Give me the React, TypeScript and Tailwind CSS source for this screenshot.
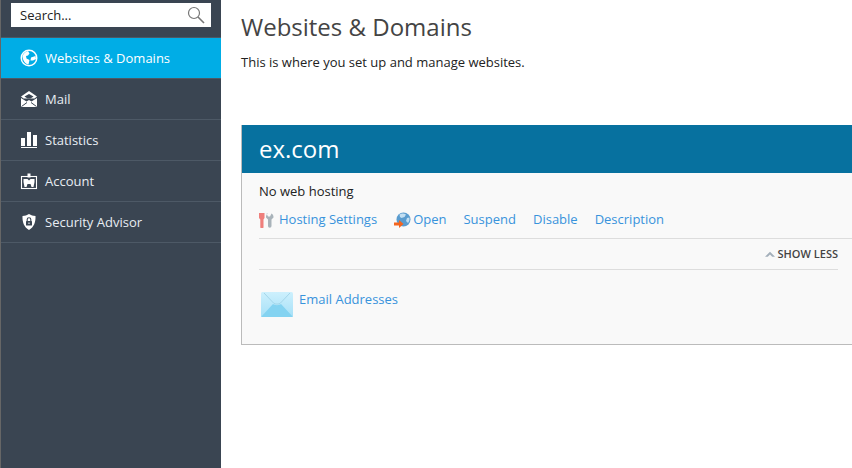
const font = "[font-family:'Open_Sans',sans-serif]";

function SearchIcon() {
  return (
    <svg width="18" height="18" viewBox="0 0 18 18" fill="none" stroke="#777">
      <circle cx="7" cy="7" r="5.500" strokeWidth="1.200" />
      <path d="M11 11l6 6" strokeWidth="1.600" />
    </svg>
  );
}

function GlobeIcon() {
  return (
    <svg width="18" height="18" viewBox="0 0 18 18">
      <circle cx="9" cy="9" r="8.500" fill="#fff" />
      <circle cx="9" cy="9" r="7" fill="#00ade6" />
      <path d="M2.500 7c1-2.500 3-4.500 5.500-5l1.500 2.500-1.500 2-2 .5.500 2.500 3 1.500-1 4.500C5 15 2.500 11 2.500 7z" fill="#fff" />
      <path d="M11 8.500l4.500-1.500.5 3-3 1.500h-2.500z" fill="#fff" />
    </svg>
  );
}

function MailIcon() {
  return (
    <svg width="18" height="18" viewBox="0 0 18 18">
      <path d="M1 6.500L9 1l8 5.500-2.500 2h-11z" fill="#fff" />
      <path d="M1 8v9h16V8l-5.500 3.500L9 10l-2.500 1.500z" fill="#fff" />
      <path d="M4.500 6.500L9 4l4.500 2.500-3 2H7.500z" fill="#3a4552" />
      <path d="M1.500 16.500L7 12.500M16.500 16.500L11 12.500" stroke="#3a4552" strokeWidth="1" />
    </svg>
  );
}

function StatsIcon() {
  return (
    <svg width="18" height="18" viewBox="0 0 18 18">
      <rect x="1" y="7" width="4" height="8" fill="#fff" />
      <rect x="7" y="1" width="4" height="14" fill="#fff" />
      <rect x="13" y="4" width="4" height="11" fill="#fff" />
      <rect x="1" y="16" width="16" height="1" fill="#fff" />
    </svg>
  );
}

function AccountIcon() {
  return (
    <svg width="18" height="18" viewBox="0 0 18 18">
      <rect x="1.500" y="4.500" width="15" height="12" fill="none" stroke="#fff" strokeWidth="1.100" />
      <rect x="7.500" y="1.500" width="3" height="4" fill="#fff" />
      <path d="M3.500 7h4l1.500 1.500L10.500 7h4v3l-1 5h-2l-1-3h-3l-1 3h-2l-1-5z" fill="#fff" />
    </svg>
  );
}

function ShieldIcon() {
  return (
    <svg width="18" height="18" viewBox="0 0 18 18">
      <path d="M9 1c2 1.300 4 1.800 6.500 2 .3 6-1.500 11-6.500 14C4 14 2.200 9 2.500 3 5 2.800 7 2.300 9 1z" fill="#fff" />
      <rect x="6" y="8" width="6" height="4.500" rx="0.500" fill="#3a4552" />
      <path d="M7.200 8V6.500a1.800 1.800 0 0 1 3.600 0V8" fill="none" stroke="#3a4552" strokeWidth="1.100" />
      <rect x="8.500" y="9.500" width="1" height="1.500" fill="#fff" />
    </svg>
  );
}

function ToolsIcon() {
  return (
    <svg width="16" height="16" viewBox="0 0 16 16">
      <path d="M0 1h5.500v5L4.500 7.500V15a1.500 1.500 0 0 1-3.200 0V7.500L0 6z" fill="#ef7f7c" />
      <path d="M7.500 1.500L9 4.500h2l1.500-3c1.500 1 2.200 2.500 2 4l-2 2V14a1.700 1.700 0 0 1-3.500 0V7.500l-2-2c-.2-1.500.5-3 2-4z" fill="#a9b3ba" />
    </svg>
  );
}

function OpenIcon() {
  return (
    <svg width="17" height="17" viewBox="0 0 17 17">
      <circle cx="9.500" cy="7.500" r="7" fill="#5a9ccf" />
      <path d="M5.500 2.500c2-1.200 4.500-1.200 6.500 0l-1.500 2.500-3 1-1.500-1zM13 6l2.300-.5c.5 2 0 4-1.300 5.500l-2-2z" fill="#c2dff2" />
      <path d="M0 10.500h5V8l4.500 4-4.500 4v-2.500H0z" fill="#f4651f" />
    </svg>
  );
}

function EnvelopeIcon() {
  return (
    <svg width="32" height="25" viewBox="0 0 32 25">
      <defs>
        <linearGradient id="env" x1="0" y1="0" x2="0" y2="1">
          <stop offset="0" stopColor="#cdf0fd" />
          <stop offset="1" stopColor="#a6e0f7" />
        </linearGradient>
      </defs>
      <rect width="32" height="25" rx="1.500" fill="url(#env)" />
      <path d="M0 25L12 12c2 1.500 6 1.500 8 0L32 25z" fill="#84d3f1" />
      <path d="M3 1l9.500 10c2 1.500 5 1.500 7 0L29 1" fill="none" stroke="#a4d6ea" strokeWidth="1" />
    </svg>
  );
}

const menu = [
  { l: 'Websites & Domains', i: GlobeIcon, active: true },
  { l: 'Mail', i: MailIcon },
  { l: 'Statistics', i: StatsIcon },
  { l: 'Account', i: AccountIcon },
  { l: 'Security Advisor', i: ShieldIcon },
];

export default function App() {
  return (
    <div className={`flex h-[468px] w-[852px] overflow-hidden bg-white ${font}`}>
      <aside className="w-[221px] shrink-0 bg-[#3a4552] border-l border-[#666]">
        <div className="h-[37px] pt-[3px] pl-[10px]">
          <div className="flex h-[24px] w-[200px] items-center justify-between bg-white pl-[9px] pr-[6px]">
            <span className="pt-[2px] text-[13px] text-[#222]">Search...</span>
            <SearchIcon />
          </div>
        </div>
        <div className="border-t border-[#4d5966]">
          {menu.map(m => {
            const Icon = m.i;
            return (
              <div
                key={m.l}
                className={`flex h-[41px] items-center gap-[7px] border-b border-[#4d5966] pl-[19px] text-[13px] ${m.active ? 'bg-[#00ade6] text-white' : 'text-[#e8edf2]'}`}
              >
                <Icon />
                <span className="pt-[2px]">{m.l}</span>
              </div>
            );
          })}
        </div>
      </aside>

      <main className="min-w-0 flex-1 pl-[20px]">
        <h1 className="pt-[10px] text-[24px] leading-[34px] text-[#444]">Websites & Domains</h1>
        <p className="mt-[9px] text-[13px] leading-[18px] text-[#222]">This is where you set up and manage websites.</p>

        <div className="mt-[54px] w-[640px] border-b border-l border-[#bbb] bg-[#f9f9f9]">
          <div className="flex h-[48px] items-center bg-[#07719f] pl-[17px] text-[24px] text-white">ex.com</div>
          <div className="pl-[17px]">
            <p className="pt-[9px] text-[13px] leading-[18px] text-[#222]">No web hosting</p>
            <div className="flex h-[39px] items-center border-b border-[#ddd] pt-[2px] text-[13px] text-[#3893dc]">
              <span className="flex items-center gap-[4px]"><ToolsIcon />Hosting Settings</span>
              <span className="ml-[17px] flex items-center gap-[2px]"><OpenIcon />Open</span>
              <span className="ml-[17px]">Suspend</span>
              <span className="ml-[17px]">Disable</span>
              <span className="ml-[17px]">Description</span>
            </div>
            <div className="flex h-[31px] w-[579px] items-center justify-end border-b border-[#ddd] text-[11px] font-semibold text-[#444]">
              <svg width="10" height="7" viewBox="0 0 9 6" className="mr-[3px]"><path d="M0 5l4.500-4.500L9 5H6.500l-2-2-2 2z" fill="#a3afba" /></svg>
              SHOW LESS
            </div>
            <div className="flex h-[74px] items-start pt-[21px] text-[13px] text-[#3893dc]">
              <span className="ml-[2px] mt-[1px]"><EnvelopeIcon /></span>
              <span className="ml-[6px] mt-[-1px] leading-[18px]">Email Addresses</span>
            </div>
          </div>
        </div>
      </main>
    </div>
  );
}
